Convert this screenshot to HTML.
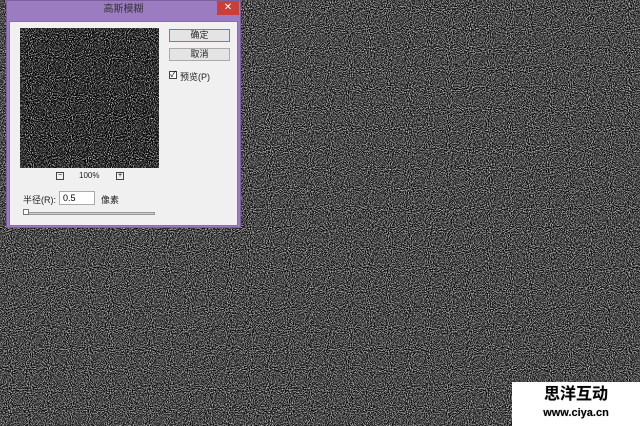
<!DOCTYPE html>
<html><head><meta charset="utf-8"><style>
*{margin:0;padding:0;box-sizing:border-box}
body{width:640px;height:426px;overflow:hidden;background:#4d4d4d;position:relative;font-family:"Liberation Sans","Noto Sans CJK SC",sans-serif}
svg.bg{position:absolute;left:0;top:0}
.dlg{position:absolute;left:6px;top:0;width:235px;height:228px;background:#9c7cc0;border:1px solid #7d5fa0}
.title{position:absolute;left:0;top:0;width:100%;height:20px;text-align:center;font-size:10px;line-height:17px;color:#333}
.close{position:absolute;left:210px;top:0;width:22px;height:14px;background:#c9403a;color:#fff;font-size:10px;text-align:center;line-height:13px}
.body{position:absolute;left:2px;top:20px;width:229px;height:205px;background:#f0f0f0;border:1px solid #8a70aa}
.prev{position:absolute;left:10px;top:6px;width:139px;height:140px;background:#333;overflow:hidden}
.btn{position:absolute;left:159px;width:61px;height:13px;border:1px solid #aaa;background:#e4e4e4;font-size:9px;text-align:center;line-height:11px;color:#222}
.t{position:absolute;font-size:8px;color:#222}
.sq{position:absolute;width:8px;height:8px;border:1px solid #444;font-size:7px;line-height:6px;text-align:center}
.wm{position:absolute;left:512px;top:382px;width:128px;height:44px;background:#fff;text-align:center}
.wm div{font-weight:bold;color:#000;text-shadow:0 0 1px #999}
</style></head><body>
<svg class="bg" width="640" height="426">
<filter id="g" color-interpolation-filters="sRGB"><feTurbulence type="fractalNoise" baseFrequency="0.95" numOctaves="2" seed="5"/><feColorMatrix type="matrix" values="2.0 0 0 0 -0.72 2.0 0 0 0 -0.72 2.0 0 0 0 -0.72 0 0 0 0 1"/></filter>
<rect width="640" height="426" filter="url(#g)"/></svg>
<div class="dlg">
<div class="title">高斯模糊</div>
<div class="close">✕</div>
<div class="body">
<div class="prev"><svg width="139" height="140"><filter id="p" color-interpolation-filters="sRGB"><feTurbulence type="fractalNoise" baseFrequency="0.95" numOctaves="2" seed="9"/><feColorMatrix type="matrix" values="2.6 0 0 0 -1.15 2.6 0 0 0 -1.15 2.6 0 0 0 -1.15 0 0 0 0 1"/></filter><rect width="139" height="140" filter="url(#p)"/></svg></div>
<div class="btn" style="top:7px;border-color:#3c8fd8">确定</div>
<div class="btn" style="top:26px">取消</div>
<div class="sq" style="left:159px;top:49px;background:#fff;font-size:8px">✓</div>
<div class="t" style="left:170px;top:48px;font-size:9px">预览(P)</div>
<div class="sq" style="left:46px;top:150px">−</div>
<div class="t" style="left:69px;top:149px">100%</div>
<div class="sq" style="left:106px;top:150px">+</div>
<div class="t" style="left:13px;top:171px;font-size:9px">半径(R):</div>
<div style="position:absolute;left:49px;top:169px;width:36px;height:14px;background:#fff;border:1px solid #aaa;font-size:9px;padding-left:3px;line-height:12px">0.5</div>
<div class="t" style="left:91px;top:171px;font-size:9px">像素</div>
<div style="position:absolute;left:14px;top:190px;width:131px;height:3px;background:#ccc;border:1px solid #999"></div>
<div style="position:absolute;left:13px;top:187px;width:6px;height:6px;background:#fff;border:1px solid #777"></div>
</div></div>
<div class="wm"><div style="font-size:16px;line-height:22px;margin-top:2px">思洋互动</div><div style="font-size:11px;line-height:14px">www.ciya.cn</div></div>
</body></html>
